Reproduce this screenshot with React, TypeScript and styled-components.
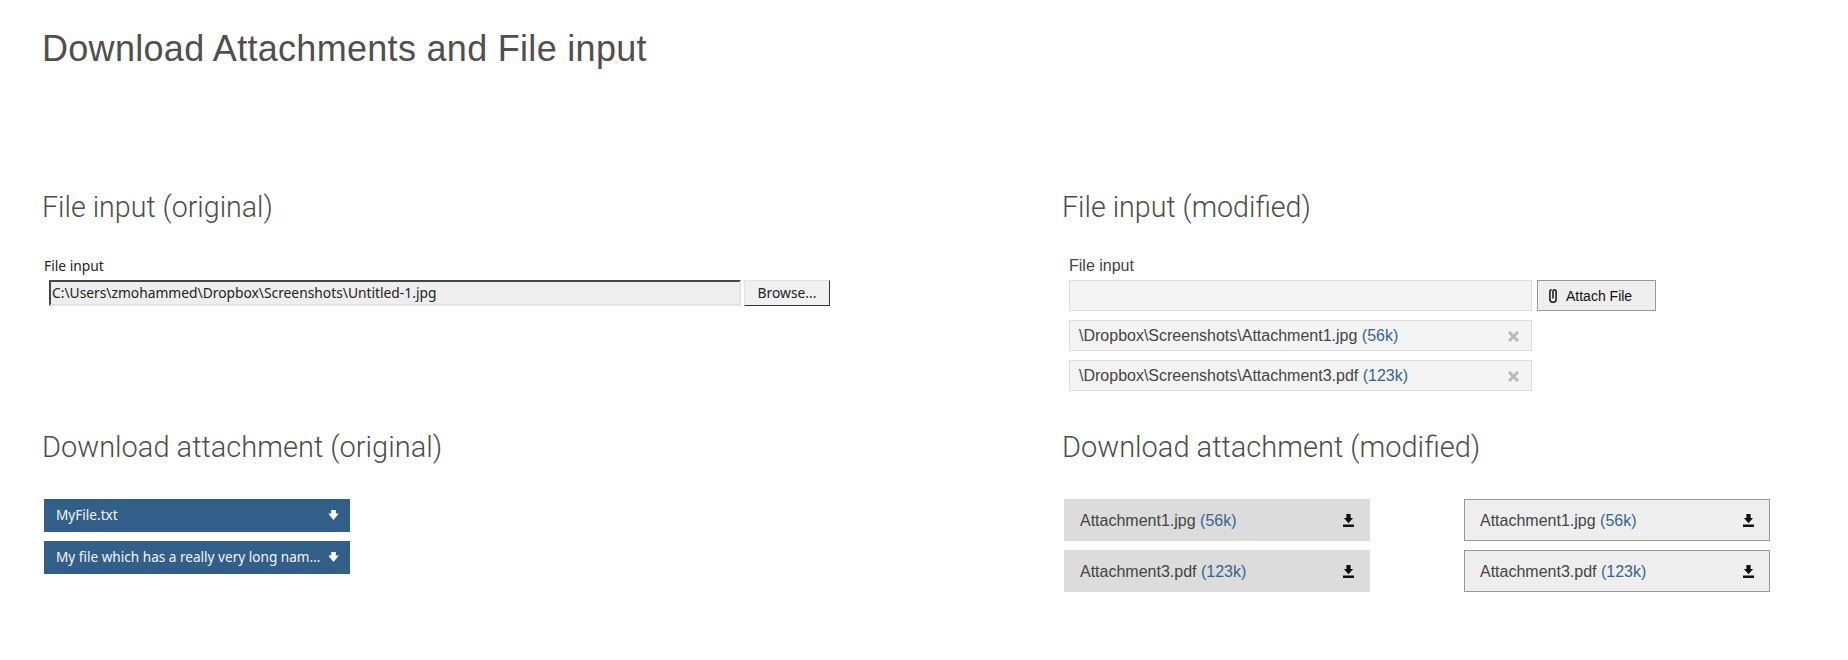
import React from "react";
import styled, { createGlobalStyle } from "styled-components";

const GlobalStyle = createGlobalStyle`
    html, body {
        margin: 0;
        padding: 0;
        background: #fff;
    }
`;

const ArrowIcon = () => (
    <svg width="11" height="10" viewBox="0 0 11 10" fill="#fff">
        <path d="M3.200 0h4.600v3.500h3L5.500 10 .2 3.500h3z" />
    </svg>
);

const DownloadIcon = () => (
    <svg width="11" height="13" viewBox="0 0 11 13" fill="#111">
        <path d="M3.400 0h4.200v4h2.500L5.500 9.300.9 4h2.500z" />
        <rect x="0" y="10.500" width="11" height="2.500" />
    </svg>
);

const CloseIcon = () => (
    <svg width="11" height="11" viewBox="0 0 11 11" fill="none" stroke="#b9b9b9" strokeWidth="3">
        <path d="M1 1l9 9M10 1L1 10" />
    </svg>
);

const ClipIcon = () => (
    <svg width="8" height="14" viewBox="0 0 8 14" fill="none" stroke="#222" strokeWidth="1.600">
        <path d="M4 9.500V2.600c0-1 .5-1.800 1.500-1.800S7.100 1.600 7.100 2.600v8c0 1.700-1.200 2.700-3 2.700S.9 12.300.9 10.600V2.800c0-1.200.7-2 1.900-2" />
    </svg>
);

const modifiedFiles = [
    { path: "\\Dropbox\\Screenshots\\Attachment1.jpg", name: "Attachment1.jpg", size: "(56k)" },
    { path: "\\Dropbox\\Screenshots\\Attachment3.pdf", name: "Attachment3.pdf", size: "(123k)" },
];

const App = () => {
    return (
        <Page>
            <GlobalStyle />
            <Title>Download Attachments and File input</Title>
            <Sections>
                <section>
                    <Heading>File input (original)</Heading>
                    <OriginalLabel>File input</OriginalLabel>
                    <OriginalRow>
                        <OriginalInput>C:\Users\zmohammed\Dropbox\Screenshots\Untitled-1.jpg</OriginalInput>
                        <BrowseButton>Browse...</BrowseButton>
                    </OriginalRow>
                </section>
                <section>
                    <Heading>File input (modified)</Heading>
                    <ModifiedLabel>File input</ModifiedLabel>
                    <ModifiedRow>
                        <ModifiedField />
                        <AttachButton>
                            <ClipIcon />
                            Attach File
                        </AttachButton>
                    </ModifiedRow>
                    <FileList>
                        {modifiedFiles.map((file) => (
                            <FileItem key={file.path}>
                                <span>
                                    {file.path} <Size>{file.size}</Size>
                                </span>
                                <CloseIcon />
                            </FileItem>
                        ))}
                    </FileList>
                </section>
                <section>
                    <Heading $wide>Download attachment (original)</Heading>
                    <OriginalDownloads>
                        <BlueButton>
                            <BlueName>MyFile.txt</BlueName>
                            <ArrowIcon />
                        </BlueButton>
                        <BlueButton>
                            <BlueName>My file which has a really very long name.txt</BlueName>
                            <ArrowIcon />
                        </BlueButton>
                    </OriginalDownloads>
                </section>
                <section>
                    <Heading $wide>Download attachment (modified)</Heading>
                    <ModifiedDownloads>
                        {modifiedFiles.map((file) => (
                            <GreyButton key={file.name}>
                                <span>
                                    {file.name} <Size>{file.size}</Size>
                                </span>
                                <DownloadIcon />
                            </GreyButton>
                        ))}
                        {modifiedFiles.map((file) => (
                            <GreyButton key={file.name} $outlined>
                                <span>
                                    {file.name} <Size>{file.size}</Size>
                                </span>
                                <DownloadIcon />
                            </GreyButton>
                        ))}
                    </ModifiedDownloads>
                </section>
            </Sections>
        </Page>
    );
};

const Page = styled.div`
    padding: 29px 0 0 42px;
    height: 631px;
    overflow: hidden;
    font-family: "Liberation Sans", Arial, sans-serif;
`;
const Title = styled.h1`
    margin: 0 0 118px;
    font-size: 36px;
    font-weight: 400;
    line-height: 40px;
    letter-spacing: 0.3px;
    color: #4f4f4f;
`;
const Sections = styled.div`
    display: grid;
    grid-template-columns: 1020px 1fr;
    row-gap: 36px;
`;
const Heading = styled.h2<{ $wide?: boolean }>`
    margin: 0;
    font-family: Roboto, "Liberation Sans", sans-serif;
    font-size: ${(props) => (props.$wide ? "29px" : "28.600px")};
    font-weight: 300;
    line-height: 40px;
    color: #4c4c4c;
`;
const OriginalLabel = styled.div`
    margin: 29px 0 4px 2px;
    font-family: "Noto Sans", sans-serif;
    font-size: 13.800px;
    line-height: 20px;
    color: #222;
`;
const OriginalRow = styled.div`
    display: flex;
    gap: 3px;
    margin-left: 7px;
`;
const OriginalInput = styled.div`
    box-sizing: border-box;
    width: 692px;
    height: 26px;
    padding-left: 1px;
    border-style: solid;
    border-width: 2px;
    border-color: #444 #e3e3e3 #e3e3e3 #444;
    background: #eee;
    font-family: "Noto Sans", sans-serif;
    font-size: 13.800px;
    line-height: 21px;
    color: #222;
`;
const BrowseButton = styled.div`
    box-sizing: border-box;
    width: 86px;
    height: 26px;
    border-style: solid;
    border-width: 1px;
    border-color: #e3e3e3 #333 #333 #e3e3e3;
    background: #f0f0f0;
    font-family: "Noto Sans", sans-serif;
    font-size: 13.800px;
    line-height: 23px;
    text-align: center;
    color: #222;
`;
const ModifiedLabel = styled.div`
    margin: 29px 0 4px 7px;
    font-size: 16px;
    line-height: 20px;
    color: #444;
`;
const ModifiedRow = styled.div`
    display: flex;
    gap: 5px;
    margin-left: 7px;
`;
const ModifiedField = styled.div`
    box-sizing: border-box;
    width: 463px;
    height: 31px;
    border: 1px solid #dcdcdc;
    background: #f4f4f4;
`;
const AttachButton = styled.div`
    box-sizing: border-box;
    display: flex;
    align-items: center;
    gap: 9px;
    width: 119px;
    height: 31px;
    padding-left: 11px;
    border: 1px solid #999;
    background: #eee;
    font-size: 14px;
    color: #111;
`;
const FileList = styled.div`
    display: flex;
    flex-direction: column;
    gap: 9px;
    margin: 9px 0 0 7px;
`;
const FileItem = styled.div`
    box-sizing: border-box;
    display: flex;
    align-items: center;
    justify-content: space-between;
    width: 463px;
    height: 31px;
    padding: 1px 12px 0 9px;
    border: 1px solid #dcdcdc;
    background: #f4f4f4;
    font-size: 16px;
    color: #444;
`;
const Size = styled.span`
    color: #36648f;
`;
const OriginalDownloads = styled.div`
    display: flex;
    flex-direction: column;
    gap: 9px;
    margin: 32px 0 0 2px;
`;
const BlueButton = styled.div`
    box-sizing: border-box;
    display: flex;
    align-items: center;
    gap: 3px;
    width: 306px;
    height: 33px;
    padding: 0 11px 2px 12px;
    background: #315f87;
    font-family: "Noto Sans", sans-serif;
    font-size: 13.600px;
    color: #f2f5f8;
`;
const BlueName = styled.span`
    flex: 1;
    min-width: 0;
    overflow: hidden;
    white-space: nowrap;
    text-overflow: ellipsis;
`;
const ModifiedDownloads = styled.div`
    display: grid;
    grid-template-rows: 42px 42px;
    grid-auto-flow: column;
    grid-auto-columns: 306px;
    gap: 9px 94px;
    margin: 32px 0 0 2px;
`;
const GreyButton = styled.div<{ $outlined?: boolean }>`
    box-sizing: border-box;
    display: flex;
    align-items: center;
    justify-content: space-between;
    padding: 1px 15px 0;
    border: 1px solid ${(props) => (props.$outlined ? "#999" : "#dcdcdc")};
    background: ${(props) => (props.$outlined ? "#eee" : "#dcdcdc")};
    font-size: 16px;
    color: #444;
`;

export default App;
